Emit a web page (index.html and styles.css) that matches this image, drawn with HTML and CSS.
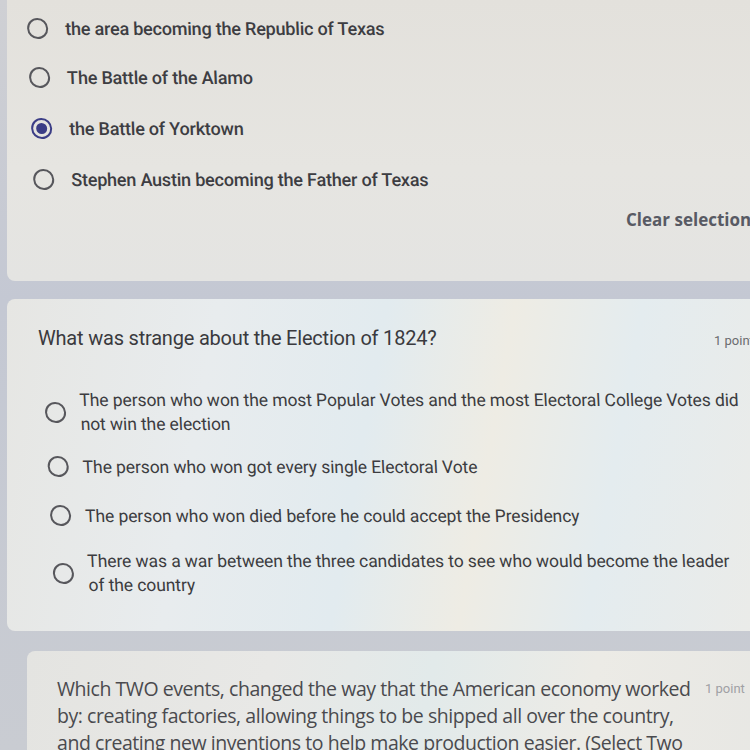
FILE: index.html
```html
<!DOCTYPE html>
<html>
<head>
<meta charset="utf-8">
<link rel="stylesheet" href="styles.css">
</head>
<body>
<div class="page">
  <section class="card card-top">
    <div class="options tilt">
      <div class="opt"><span class="radio"></span><span class="label">the area becoming the Republic of Texas</span></div>
      <div class="opt"><span class="radio"></span><span class="label">The Battle of the Alamo</span></div>
      <div class="opt"><span class="radio checked"></span><span class="label">the Battle of Yorktown</span></div>
      <div class="opt"><span class="radio"></span><span class="label">Stephen Austin becoming the Father of Texas</span></div>
    </div>
    <div class="clear-row"><span class="clear">Clear selection</span></div>
  </section>

  <section class="card card-mid">
    <div class="q-head">
      <span class="q-title">What was strange about the Election of 1824?</span>
      <span class="points">1 point</span>
    </div>
    <div class="options tilt2">
      <div class="opt2"><span class="radio"></span><span class="label2">The person who won the most Popular Votes and the most Electoral College Votes did not win the election</span></div>
      <div class="opt2"><span class="radio"></span><span class="label2">The person who won got every single Electoral Vote</span></div>
      <div class="opt2"><span class="radio"></span><span class="label2">The person who won died before he could accept the Presidency</span></div>
      <div class="opt2"><span class="radio"></span><span class="label2 narrow">There was a war between the three candidates to see who would become the leader of the country</span></div>
    </div>
  </section>

  <section class="card card-bottom">
    <div class="q-head3">
      <span class="q-title3">Which TWO events, changed the way that the American economy worked by: creating factories, allowing things to be shipped all over the country, and creating new inventions to help make production easier. (Select Two</span>
      <span class="points3">1 point</span>
    </div>
  </section>
</div>
</body>
</html>
```

FILE: styles.css
```css
html, body {
  margin: 0;
  padding: 0;
}
body {
  width: 750px;
  height: 750px;
  overflow: hidden;
  background: linear-gradient(180deg, #cfd0d4 0%, #c4c8d3 40%, #c9ccd2 100%);
  font-family: Roboto, "Liberation Sans", sans-serif;
  color: #3c3c40;
}
.page {
  padding-left: 7px;
  display: flex;
  flex-direction: column;
}
.card {
  width: 790px;
  border-radius: 8px;
}
.card-top {
  height: 281px;
  border-radius: 0 0 8px 8px;
  background: linear-gradient(180deg, #e3e1dc 0%, #e6e5e1 60%, #e4e4e2 100%);
  display: flex;
  flex-direction: column;
}
.options {
  display: flex;
  flex-direction: column;
}
.tilt {
  padding: 5px 0 0 19px;
  transform: skewX(2.3deg);
  transform-origin: 0 0;
}
.opt {
  height: 51px;
  display: flex;
  align-items: center;
  gap: 17px;
}
.opt:first-child { height: 47px; }
.radio {
  box-sizing: border-box;
  width: 21px;
  height: 21px;
  flex: none;
  border: 2px solid #57575c;
  border-radius: 50%;
  display: flex;
  align-items: center;
  justify-content: center;
}
.radio.checked {
  border-color: #3b3d86;
}
.radio.checked::after {
  content: "";
  width: 11px;
  height: 11px;
  border-radius: 50%;
  background: #3b3d86;
}
.label {
  font-size: 18px;
  font-weight: 500;
  color: #3d3d42;
  letter-spacing: -0.2px;
}
.clear-row {
  display: flex;
  justify-content: flex-end;
  padding: 3px 0 0 0;
}
.clear {
  margin-right: 31px;
  font-family: "Open Sans", sans-serif;
  font-size: 17px;
  font-weight: 700;
  color: #585a64;
  width: 140px;
  white-space: nowrap;
}
.card-mid {
  margin-top: 18px;
  height: 332px;
  background: linear-gradient(100deg, #e6e6e3 0%, #e8ecee 25%, #e2ebef 45%, #eeece4 60%, #e4ecef 75%, #ecebe7 100%);
  display: flex;
  flex-direction: column;
}
.q-head {
  display: flex;
  justify-content: space-between;
  align-items: baseline;
  padding: 27px 0 0 31px;
}
.q-title {
  font-size: 20px;
  color: #3a3a3e;
  letter-spacing: -0.2px;
}
.points {
  font-size: 13px;
  color: #6b6b70;
  margin-right: 7px;
  width: 76px;
  white-space: nowrap;
}
.tilt2 {
  padding: 33px 0 0 35px;
  transform: skewX(2.8deg);
  transform-origin: 0 0;
}
.opt2 {
  display: flex;
  align-items: center;
  gap: 14px;
  min-height: 47px;
  padding-bottom: 2px;
}
.opt2:first-child { min-height: 58px; }
.opt2:last-child { margin-top: 8px; }
.label2 {
  font-size: 17.5px;
  line-height: 24px;
  color: #3c3c40;
  letter-spacing: -0.1px;
  max-width: 675px;
}
.label2.narrow {
  max-width: 645px;
}
.card-bottom {
  margin: 20px 0 0 20px;
  height: 160px;
  background: linear-gradient(100deg, #e4e4e1 0%, #e8e8e6 30%, #e2eaea 50%, #ecebe6 70%, #e6e6e3 100%);
}
.q-head3 {
  display: flex;
  align-items: flex-start;
  padding: 24px 0 0 30px;
  gap: 12px;
}
.q-title3 {
  font-family: "Open Sans", sans-serif;
  font-size: 19.5px;
  line-height: 27px;
  color: #4a4a4e;
  width: 636px;
  flex: none;
  letter-spacing: -0.45px;
}
.points3 {
  font-size: 13px;
  color: #a0a0a4;
  padding-top: 6px;
  white-space: nowrap;
}
```
